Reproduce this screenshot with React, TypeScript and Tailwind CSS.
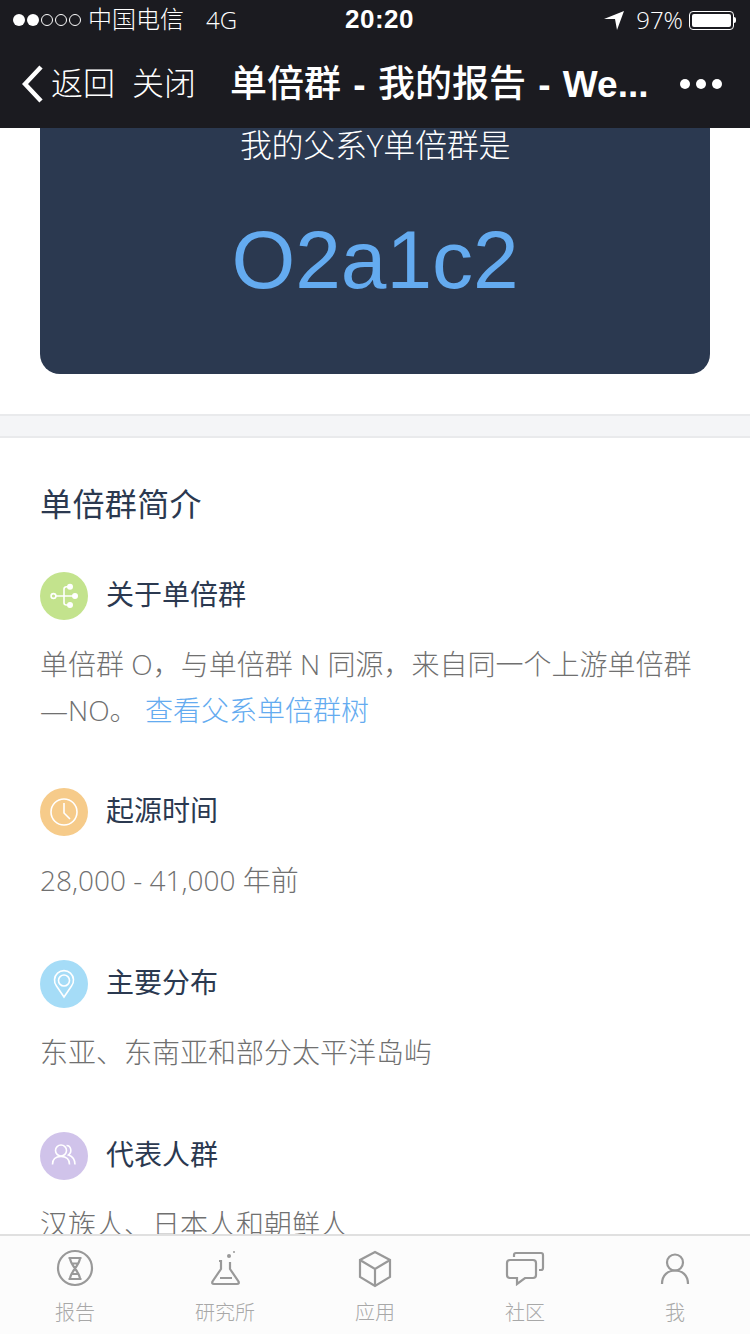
const font = { fontFamily: '"Liberation Sans", "Noto Sans CJK SC", sans-serif' };
const lightFont = { fontFamily: '"Open Sans", "Noto Sans CJK SC", sans-serif' };

function StatusBar() {
  return (
    <div className="h-10 flex items-center justify-between pl-[13px] pr-[14px] text-white text-2xl relative">
      <div className="flex items-center">
        <div className="flex items-center gap-[2px]">
          <span className="w-3 h-3 rounded-full bg-white" />
          <span className="w-3 h-3 rounded-full bg-white" />
          <span className="w-3 h-3 rounded-full border border-white" />
          <span className="w-3 h-3 rounded-full border border-white" />
          <span className="w-3 h-3 rounded-full border border-white" />
        </div>
        <span className="ml-[7px] font-light">中国电信</span>
        <span className="ml-[22px] font-light" style={lightFont}>4G</span>
      </div>
      <span className="absolute left-[345px] top-[2px] text-[26px] font-bold tracking-[0.5px]">20:20</span>
      <div className="flex items-center">
        <svg width="20" height="20" viewBox="0 0 20 20" fill="#fff">
          <path d="M0 9 L20 1 L13 20 L11 9 Z" />
        </svg>
        <span className="ml-[12px] font-light" style={lightFont}>97%</span>
        <div className="ml-[6px] flex items-center">
          <div className="w-[45px] h-[19px] rounded-[4px] border border-white p-[2px]">
            <div className="w-full h-full rounded-[2px] bg-white" />
          </div>
          <div className="w-[2px] h-[6px] bg-white rounded-r-sm" />
        </div>
      </div>
    </div>
  );
}

function NavBar() {
  return (
    <div className="h-[88px] flex items-center pl-[22px] pr-[28px] text-white">
      <svg width="22" height="38" viewBox="0 0 22 38" fill="none" stroke="#fff" strokeWidth="4.5">
        <path d="M19 2 L3 19 L19 36" />
      </svg>
      <span className="ml-[7px] text-[32px] font-light leading-none">返回</span>
      <span className="ml-[17px] text-[32px] font-light leading-none">关闭</span>
      <span className="ml-[34px] text-[37px] font-medium leading-none whitespace-nowrap [word-spacing:2px]">
        单倍群 <b>-</b> 我的报告 <b>- We...</b>
      </span>
      <div className="ml-auto flex gap-[6px]">
        <span className="w-[10px] h-[10px] rounded-full bg-white" />
        <span className="w-[10px] h-[10px] rounded-full bg-white" />
        <span className="w-[10px] h-[10px] rounded-full bg-white" />
      </div>
    </div>
  );
}

function IconBadge({ color, children }: { color: string; children: React.ReactNode }) {
  return (
    <div className={`w-12 h-12 rounded-full flex items-center justify-center shrink-0 ${color}`}>
      <svg width="48" height="48" viewBox="0 0 48 48" fill="none" stroke="#fff" strokeWidth="1.6">
        {children}
      </svg>
    </div>
  );
}

function InfoItem({ icon, title, className, children }: { icon: React.ReactNode; title: string; className?: string; children: React.ReactNode }) {
  return (
    <div className={className}>
      <div className="flex items-center gap-[18px] h-12">
        {icon}
        <span className="text-[28px] text-[#2b3950] leading-none font-normal">{title}</span>
      </div>
      <p className="mt-[21px] text-[28px] leading-[46px] text-[#707070] font-light" style={lightFont}>{children}</p>
    </div>
  );
}

function TabItem({ label, children }: { label: string; children: React.ReactNode }) {
  return (
    <div className="flex-1 flex flex-col items-center">
      <svg width="50" height="50" viewBox="0 0 50 50" fill="none" stroke="#999" strokeWidth="2.2" className="mt-[7px]">
        {children}
      </svg>
      <span className="text-xl leading-7 mt-[6px] text-[#a8a8a8] font-light">{label}</span>
    </div>
  );
}

export default function App() {
  return (
    <div className="w-[750px] h-[1334px] flex flex-col overflow-hidden bg-white" style={font}>
      <div className="bg-[#1b1b20] shrink-0">
        <StatusBar />
        <NavBar />
      </div>

      <div className="flex-1 overflow-hidden">
        {/* Result card */}
        <div className="px-10 pb-10">
          <div className="h-[246px] rounded-b-[20px] bg-[#2b3950] flex flex-col items-center">
            <span className="text-[32px] text-white font-light leading-9 mt-[-1px] tracking-[-0.3px]" style={lightFont}>我的父系Y单倍群是</span>
            <span className="text-[82px] leading-none mt-[56px] text-[#64abf0]">O2a1c2</span>
          </div>
        </div>

        <div className="h-6 bg-[#f4f5f7] border-y-2 border-[#e9eaec]" />

        {/* Intro */}
        <div className="px-10 pt-[47px]">
          <h2 className="text-[32px] leading-10 text-[#2b3950] font-normal tracking-[0.4px]">单倍群简介</h2>
          <div className="mt-[47px] flex flex-col gap-[57px]">
            <InfoItem
              className="-mb-[2px]"
              title="关于单倍群"
              icon={
                <IconBadge color="bg-[#c3e38d]">
                  <circle cx="13.5" cy="24" r="2.4" />
                  <path d="M16 24 H35 M30 14.7 H26.5 Q24 14.7 24 17 V31 Q24 33 26.5 33 H30" />
                  <circle cx="30" cy="14.7" r="2.2" fill="#fff" />
                  <circle cx="35" cy="24" r="2.2" fill="#fff" />
                  <circle cx="30" cy="33" r="2.2" fill="#fff" />
                </IconBadge>
              }
            >
              单倍群 O，与单倍群 N 同源，来自同一个上游单倍群
              <br />
              —NO。 <span className="text-[#64abf0]">查看父系单倍群树</span>
            </InfoItem>
            <InfoItem
              title="起源时间"
              icon={
                <IconBadge color="bg-[#f6cb8a]">
                  <circle cx="24" cy="24" r="13" />
                  <path d="M24 15 V25 L30 31" />
                </IconBadge>
              }
            >
              28,000 - 41,000 年前
            </InfoItem>
            <InfoItem
              title="主要分布"
              icon={
                <IconBadge color="bg-[#a5dcf7]">
                  <path d="M24 37 L16.5 26 A9.5 9.5 0 1 1 31.5 26 Z" />
                  <circle cx="24" cy="20.5" r="5.5" />
                </IconBadge>
              }
            >
              东亚、东南亚和部分太平洋岛屿
            </InfoItem>
            <InfoItem
              title="代表人群"
              icon={
                <IconBadge color="bg-[#d0c3ea]">
                  <circle cx="21" cy="18.5" r="5.5" />
                  <path d="M12.5 32.5 C12.5 27 16 24.5 21 24.5 S29.5 27 29.5 32.5" />
                  <path d="M26.5 13.5 C31 13.5 32.5 20 28.5 23 C33 24.5 35 28 35 32.5" />
                </IconBadge>
              }
            >
              汉族人、日本人和朝鲜人
            </InfoItem>
          </div>
        </div>
      </div>

      {/* Tab bar */}
      <div className="h-[100px] shrink-0 flex bg-[#fcfcfc] border-t-2 border-[#e0e0e0]">
        <TabItem label="报告">
          <circle cx="25" cy="25" r="17" />
          <path d="M18.5 15 H31.5 M18.5 36 H31.5 M20 15 C20 22 30 29 30 36 M30 15 C30 22 20 29 20 36 M21.5 20.5 H28.5 M21.5 31 H28.5" />
        </TabItem>
        <TabItem label="研究所">
          <circle cx="29" cy="13" r="2" fill="#999" stroke="none" />
          <circle cx="34" cy="9" r="1" fill="#999" stroke="none" />
          <path d="M19 18 H21 V26 L12.5 38.5 Q11.5 41 14 41 H37 Q39.5 41 38.5 38.5 L30 26 V19 M20 35 H32" />
        </TabItem>
        <TabItem label="应用">
          <path d="M25 9 L40 17 V34 L25 43 L10 34 V17 Z M10 17 L25 26 L40 17 M25 26 V43" />
        </TabItem>
        <TabItem label="社区">
          <path d="M10 17 H33 Q36 17 36 20 V32 Q36 35 33 35 H25 L17 41 V35 H10 Q7 35 7 32 V20 Q7 17 10 17 Z" />
          <path d="M14 14 V12 Q14 10 16 10 H41 Q43 10 43 12 V25 Q43 27 41 27 H39" />
        </TabItem>
        <TabItem label="我">
          <circle cx="25" cy="19.5" r="8" />
          <path d="M12 41 C12 32 18 27.5 25 27.5 S38 32 38 41" />
        </TabItem>
      </div>
    </div>
  );
}
